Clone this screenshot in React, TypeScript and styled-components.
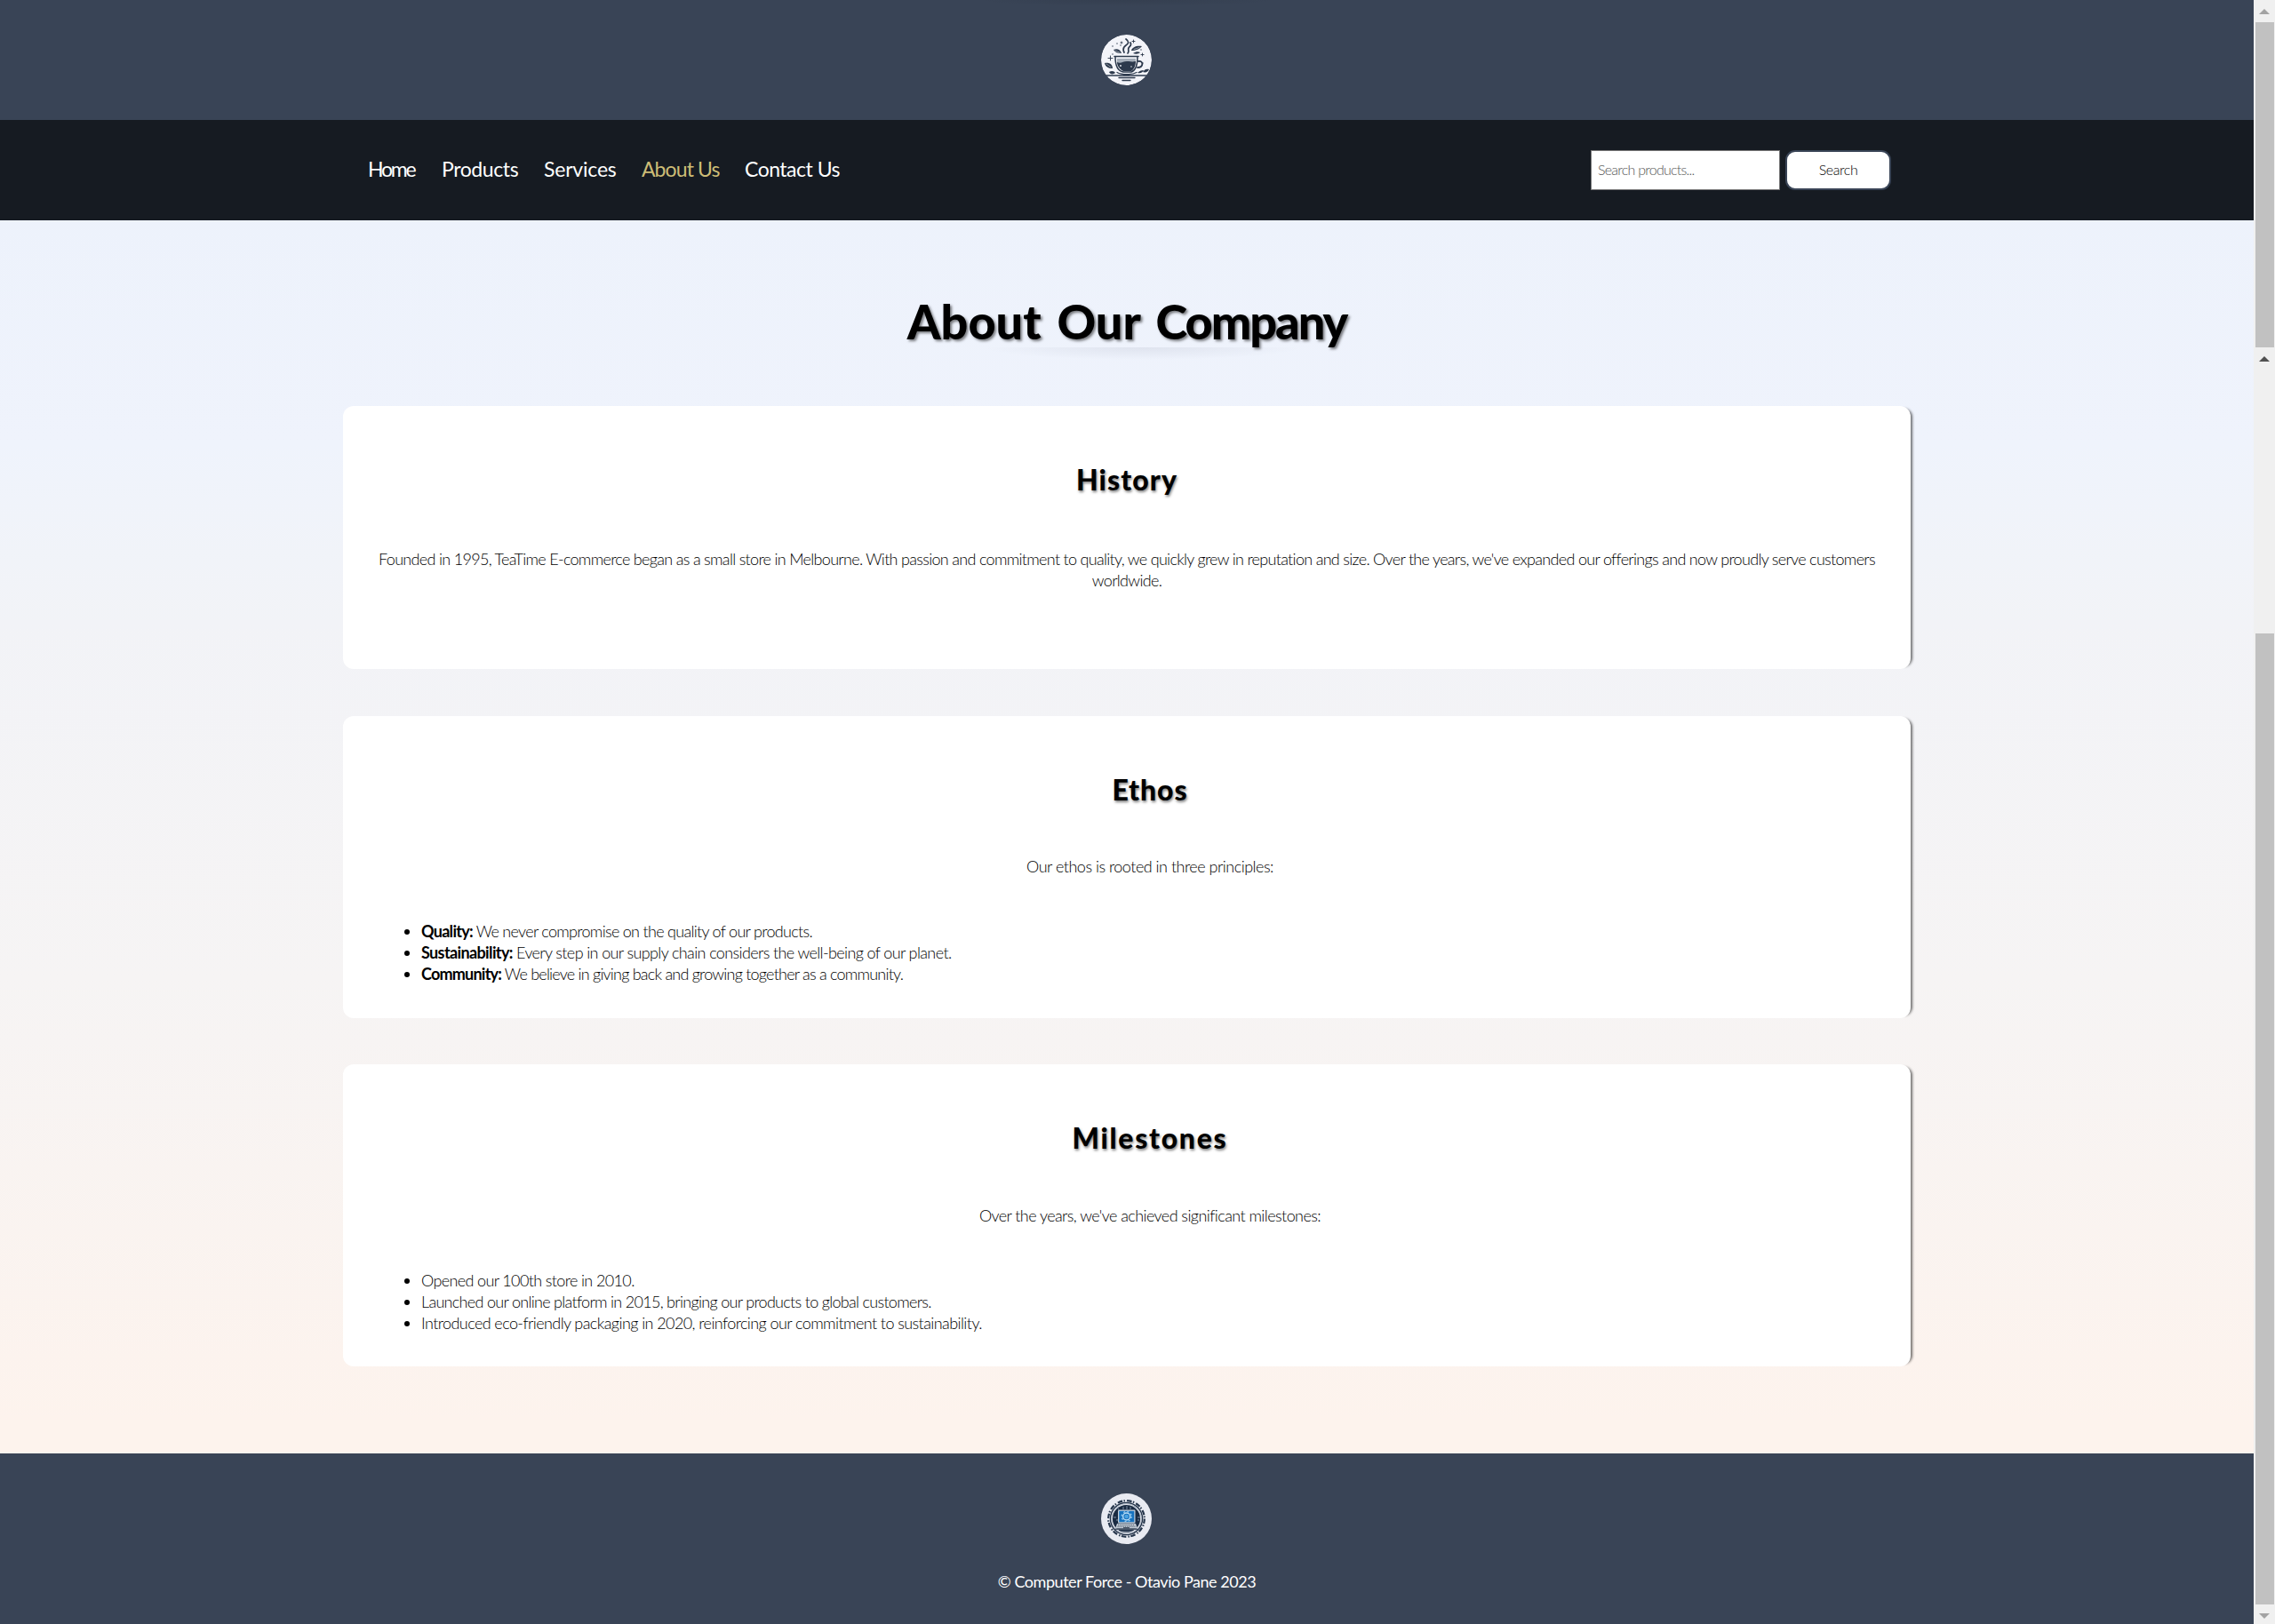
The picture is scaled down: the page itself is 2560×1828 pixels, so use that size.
import React from "react";
import styled, { createGlobalStyle } from "styled-components";

const slate = "#394456";
const ink = "#161b22";

const GlobalStyle = createGlobalStyle`
  html, body { margin: 0; padding: 0; }
  body { font-family: Lato, "Open Sans", sans-serif; color: #000; overflow: hidden; }
  * { box-sizing: border-box; }
`;

const Window = styled.div`
  display: flex;
  width: 2560px;
  height: 1828px;
`;

const Page = styled.div`
  flex: 1;
  display: flex;
  flex-direction: column;
  background: linear-gradient(180deg, #ebf1fb 0, #eff3fc 500px, #f2f3f7 700px, #f6f4f4 1100px, #fdf3ed 1600px);
`;

const Header = styled.header`
  height: 135px;
  display: flex;
  align-items: center;
  justify-content: center;
  background: radial-gradient(170px 7px at 50% 0, rgba(20, 25, 35, 0.12), transparent), ${slate};
`;

const Nav = styled.nav`
  height: 113px;
  padding: 0 408px 0 414px;
  display: flex;
  align-items: center;
  justify-content: space-between;
  background: ${ink};
`;

const Links = styled.div`
  display: flex;
  gap: 29px;
  line-height: 30px;
  padding-bottom: 3px;
`;

const NavLink = styled.a<{ $active?: boolean; $width: number; $tracking: number }>`
  width: ${(p) => p.$width}px;
  font-size: 23px;
  white-space: nowrap;
  letter-spacing: ${(p) => p.$tracking}px;
  color: ${(p) => (p.$active ? "#cdbd76" : "#fff")};
`;

const SearchForm = styled.div`
  display: flex;
  gap: 6px;
`;

const SearchInput = styled.input`
  width: 213px;
  height: 45px;
  padding: 0 7px 3px;
  border: 1px solid #767676;
  border-radius: 0;
  background: #fff;
  font-family: inherit;
  font-weight: 300;
  font-size: 16px;
  letter-spacing: -0.75px;
  &::placeholder { color: #555; opacity: 1; }
`;

const SearchButton = styled.button`
  width: 119px;
  height: 45px;
  padding: 0 0 3px;
  border: 2px solid ${slate};
  border-radius: 11px;
  background: #fff;
  font-family: inherit;
  font-weight: 300;
  font-size: 16px;
  letter-spacing: -0.4px;
  color: #000;
`;

const Main = styled.main`
  height: 1388px;
  padding: 78px 386px 0;
  display: flex;
  flex-direction: column;
`;

const Title = styled.h1`
  height: 131px;
  margin: 0;
  text-align: center;
  font-size: 54px;
  line-height: 72px;
  font-weight: 900;
  letter-spacing: 0;
  word-spacing: 5px;
  white-space: nowrap;
  text-shadow: 2px 2px 3px rgba(0, 0, 0, 0.5);
  background: radial-gradient(178px 14px at 51% 0, rgba(120, 125, 150, 0.13), transparent) 0 65px no-repeat;
`;

const TightWord = styled.span`
  letter-spacing: -2px;
`;

const Sections = styled.div`
  display: flex;
  flex-direction: column;
  gap: 52.5px;
`;

const Card = styled.section<{ $height: number; $indent?: boolean }>`
  height: ${(p) => p.$height}px;
  padding: 63px 36px 0 ${(p) => (p.$indent ? 88 : 36)}px;
  border-radius: 12px;
  background: #fff;
  box-shadow: 5px 0 3px -3px rgba(0, 0, 0, 0.55);
`;

const CardTitle = styled.h2<{ $tracking: number }>`
  margin: 0 0 54px;
  text-align: center;
  font-size: 32px;
  line-height: 40px;
  font-weight: 900;
  letter-spacing: ${(p) => p.$tracking}px;
  text-shadow: 1px 2px 3px rgba(0, 0, 0, 0.5);
`;

const Text = styled.p<{ $tracking: number; $top?: number }>`
  margin: ${(p) => p.$top ?? 0}px 0 49px;
  text-align: center;
  font-size: 18px;
  line-height: 24px;
  font-weight: 300;
  letter-spacing: ${(p) => p.$tracking}px;
`;

const List = styled.ul`
  margin: 0;
  padding: 0;
  font-size: 18px;
  line-height: 24px;
  font-weight: 300;
`;

const Item = styled.li<{ $tracking: number }>`
  letter-spacing: ${(p) => p.$tracking}px;
`;

const Term = styled.strong`
  font-weight: 700;
`;

const Footer = styled.footer`
  height: 192px;
  padding-top: 45px;
  display: flex;
  flex-direction: column;
  align-items: center;
  background: ${slate};
  color: #fff;
`;

const Copyright = styled.p`
  margin: 30px 0 0;
  font-size: 18px;
  line-height: 24px;
  white-space: nowrap;
  letter-spacing: -0.45px;
`;

const Scrollbar = styled.div`
  width: 24px;
  display: flex;
  flex-direction: column;
  align-items: center;
  background: #f0f0f0;
`;

const Thumb = styled.div<{ $height: number }>`
  width: 21px;
  margin-left: 1px;
  height: ${(p) => p.$height}px;
  background: #c1c1c1;
`;

const ArrowBox = styled.div<{ $height: number; $color: string; $down?: boolean }>`
  height: ${(p) => p.$height}px;
  padding-top: 10px;
  &::after {
    content: "";
    display: block;
    width: 12px;
    height: 6px;
    background: ${(p) => p.$color};
    clip-path: ${(p) => (p.$down ? "polygon(0 0, 100% 0, 50% 100%)" : "polygon(50% 0, 100% 100%, 0 100%)")};
  }
`;

const Logo = styled.svg`
  display: block;
  width: 57px;
  height: 57px;
  margin-right: 1px;
`;

const navy = "#2c394c";

const TeaLogo = () => (
  <Logo viewBox="0 0 57 57" fill="none" stroke={navy} strokeLinecap="round">
    <defs>
      <clipPath id="tea"><circle cx="28.5" cy="28.5" r="28.5" /></clipPath>
    </defs>
    <g clipPath="url(#tea)">
      <circle cx="28.5" cy="28.5" r="28.5" fill="#f3f4f9" stroke="none" />
      <path d="M28 5c4 3 3 5 0 7s-4 4-2 8M33 9c2 3-1 4-2 6s1 4-1 6" strokeWidth="1.7" />
      <path d="M15 24.500h27M16 25c0 10 3 16 9 17h9c6-2 7-9 7-17" strokeWidth="1.5" />
      <path d="M18 27h21v5c-3-1-6-2-10 0s-7 0-11 0z" fill="#a6afba" stroke="none" />
      <path d="M18 31c4 2 7-1 11-1s6 1 10 0c0 5-2 9-5 11h-9c-4-2-7-6-7-10z" fill={navy} stroke="none" />
      <path d="M42 30c6-1 6 7-1 7" strokeWidth="1.8" />
      <path d="M18 42.500c5 3 17 3 22 0M5 46h46M20 48.500h18M24 51.500h9" strokeWidth="1.3" />
      <g fill={navy} stroke="none">
        <path d="M4 32c6-1 9 2 9 6-5 0-8-2-9-6zM9 42c3-2 6-1 7 1-2 2-6 2-7-1zM14 17c4-2 8 0 9 4-4 0-7-1-9-4zM34 18c1-4 6-6 12-5-2 3-7 5-12 5zM36 21c3-2 6-2 8-1-2 2-5 2-8 1zM41 43c2-2 4-3 7-3-1 2-3 4-7 3zM47 42c2-3 4-4 7-3-1 3-4 4-7 3z" />
        <circle cx="13" cy="13" r=".7" /><circle cx="22" cy="12" r=".7" /><circle cx="47" cy="32" r=".7" />
        <circle cx="45" cy="17" r=".7" /><circle cx="13" cy="22" r=".7" /><circle cx="18" cy="10" r=".7" />
      </g>
      <path d="M10.500 24v5m-2.500-2.500h5M36.500 6v3m-1.500-1.500h3M46.500 21v3m-1.500-1.500h3M23 8v2m-1-1h2" strokeWidth=".9" />
      <path d="M16 18l5 2M37 16.500l6-2M6 33l5 3.500" stroke="#f3f4f9" strokeWidth=".5" />
      <circle cx="22" cy="35" r="1" fill="#dfe3ea" stroke="none" />
      <circle cx="34" cy="36" r=".8" fill="#dfe3ea" stroke="none" />
    </g>
  </Logo>
);

const ComputerLogo = () => (
  <Logo viewBox="0 0 57 57" fill="none">
    <circle cx="28.500" cy="28.500" r="28.500" fill="#e9ebf2" />
    <circle cx="28.500" cy="28.500" r="20.300" stroke="#26364c" strokeWidth="2.200" strokeDasharray="5.500 1.400 1.500 2.230" />
    <circle cx="28.500" cy="28.500" r="18" stroke="#26364c" strokeWidth="1.500" />
    <circle cx="28.500" cy="28.500" r="16.800" stroke="#aab4c1" strokeWidth=".8" />
    <circle cx="28.500" cy="28.500" r="15.600" fill="#1a2b42" />
    <path d="M17 15l3 3m17-4l3 4M14 27h3m24 0h3m-27 3h2m22 0h2M25 15v3m4-4v4m4-3v3" stroke="#8b9bb0" strokeWidth=".9" />
    <rect x="19" y="18.500" width="19.500" height="15" rx="1" fill="#c3cfdb" />
    <rect x="20.300" y="19.800" width="17" height="12.400" fill="#1672bf" />
    <circle cx="28.700" cy="26" r="4" stroke="#b9ddf5" strokeWidth="1.400" />
    <circle cx="28.700" cy="26" r="5.500" stroke="#8bc4ec" strokeWidth="1.500" strokeDasharray="2 2.320" />
    <circle cx="28.700" cy="26" r="2.300" fill="#4ba2df" />
    <path d="M18 34h21l2 5.500H16z" fill="#c0c9d3" />
    <path d="M19 35.500h19M18.500 37.300h20" stroke="#4b596b" strokeWidth=".9" strokeDasharray="1.300 .8" />
    <path d="M16 39.500h25v1.500H16zM25 38h7v1.500h-7z" fill="#4d596a" />
    <path d="M22 43h13" stroke="#8f9bab" strokeWidth=".9" />
  </Logo>
);

const links = [
  { label: "Home", width: 54, tracking: -2.2 },
  { label: "Products", width: 86, tracking: -0.4 },
  { label: "Services", width: 81, tracking: -0.2 },
  { label: "About Us", width: 87, tracking: -0.9, active: true },
  { label: "Contact Us", width: 108, tracking: -0.5 },
];

export default function App() {
  return (
    <Window>
      <GlobalStyle />
      <Page>
        <Header><TeaLogo /></Header>
        <Nav>
          <Links>
            {links.map((l) => (
              <NavLink key={l.label} $active={l.active} $width={l.width} $tracking={l.tracking}>{l.label}</NavLink>
            ))}
          </Links>
          <SearchForm>
            <SearchInput placeholder="Search products..." />
            <SearchButton>Search</SearchButton>
          </SearchForm>
        </Nav>
        <Main>
          <Title>About Our <TightWord>Company</TightWord></Title>
          <Sections>
            <Card $height={296}>
              <CardTitle $tracking={1.1}>History</CardTitle>
              <Text $tracking={-0.69} $top={57}>
                Founded in 1995, TeaTime E-commerce began as a small store in Melbourne. With passion and commitment to quality, we quickly grew in reputation and size. Over the years, we've expanded our offerings and now proudly serve customers worldwide.
              </Text>
            </Card>
            <Card $height={340} $indent>
              <CardTitle $tracking={0.9}>Ethos</CardTitle>
              <Text $tracking={-0.5}>Our ethos is rooted in three principles:</Text>
              <List>
                <Item $tracking={-0.7}><Term>Quality:</Term> We never compromise on the quality of our products.</Item>
                <Item $tracking={-0.62}><Term>Sustainability:</Term> Every step in our supply chain considers the well-being of our planet.</Item>
                <Item $tracking={-0.78}><Term>Community:</Term> We believe in giving back and growing together as a community.</Item>
              </List>
            </Card>
            <Card $height={340} $indent>
              <CardTitle $tracking={1.7}>Milestones</CardTitle>
              <Text $tracking={-0.57} $top={55}>Over the years, we've achieved significant milestones:</Text>
              <List>
                <Item $tracking={-0.63}>Opened our 100th store in 2010.</Item>
                <Item $tracking={-0.7}>Launched our online platform in 2015, bringing our products to global customers.</Item>
                <Item $tracking={-0.58}>Introduced eco-friendly packaging in 2020, reinforcing our commitment to sustainability.</Item>
              </List>
            </Card>
          </Sections>
        </Main>
        <Footer>
          <ComputerLogo />
          <Copyright>© Computer Force - Otavio Pane 2023</Copyright>
        </Footer>
      </Page>
      <Scrollbar>
        <ArrowBox $height={25} $color="#a3a3a3" />
        <Thumb $height={366} />
        <ArrowBox $height={322} $color="#505050" />
        <Thumb $height={1093} />
        <ArrowBox $height={22} $color="#a3a3a3" $down />
      </Scrollbar>
    </Window>
  );
}
